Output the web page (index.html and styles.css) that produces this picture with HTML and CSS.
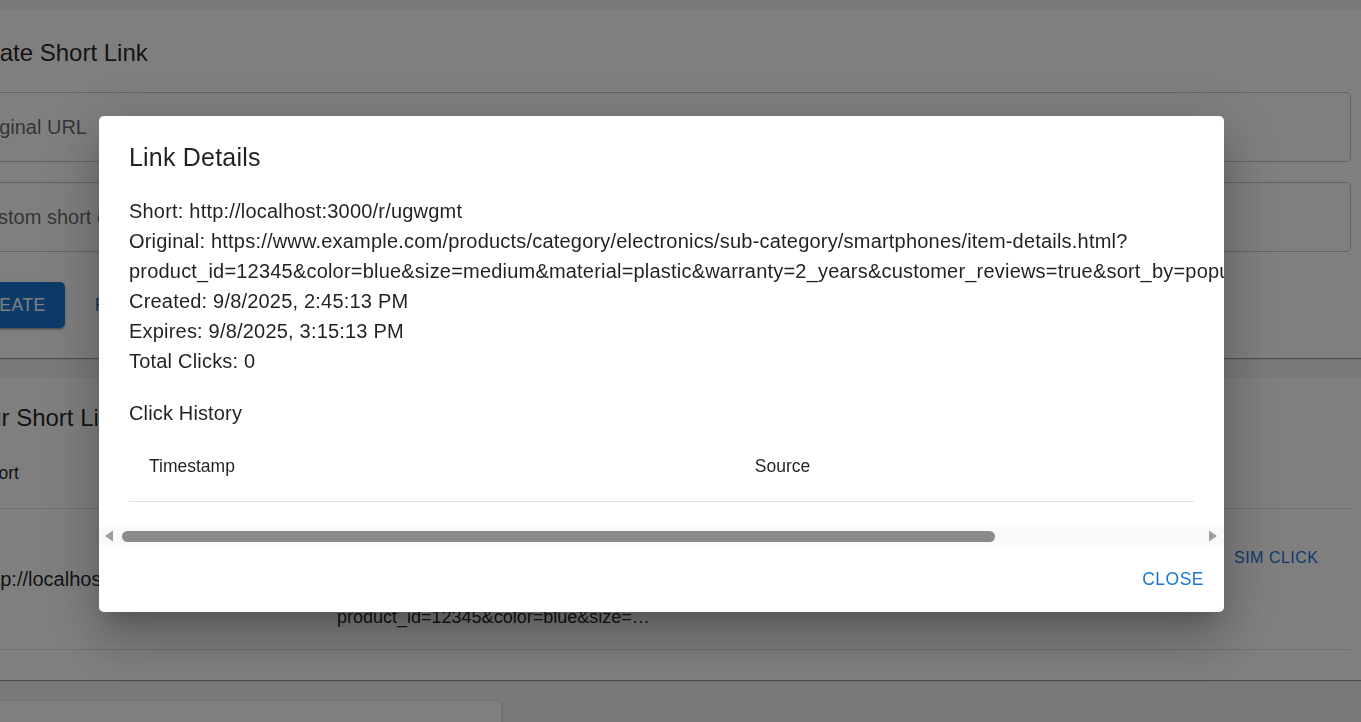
FILE: index.html
```html
<!DOCTYPE html>
<html lang="en">
<head>
<meta charset="utf-8">
<title>Link Details</title>
<link rel="stylesheet" href="styles.css">
</head>
<body>
<div class="page">
  <section class="paper create">
    <h2 class="h5 create-title">Create Short Link</h2>
    <div class="field"><span class="field-label">Original URL</span></div>
    <div class="field"><span class="field-label">Custom short code (optional)</span></div>
    <div class="btn-row">
      <button class="btn btn-contained">Create</button>
      <button class="btn btn-text">Reset</button>
    </div>
  </section>

  <section class="paper list">
    <h2 class="h5 list-title">Your Short Links</h2>
    <table class="links">
      <thead>
        <tr>
          <th class="col-short">Short</th>
          <th class="col-orig">Original</th>
          <th class="col-actions">Actions</th>
        </tr>
      </thead>
      <tbody>
        <tr>
          <td class="col-short cell-short">http://localhost:3000/r/ugwgmt</td>
          <td class="col-orig cell-orig">
            <span class="clamp-line">https://www.example.com/products/category/electronics/</span>
            <span class="clamp-line">sub-category/smartphones/item-details.html?</span>
            <span class="clamp-line">product_id=12345&amp;color=blue&amp;size=…</span>
          </td>
          <td class="col-actions cell-actions">
            <div class="action-btns">
              <button class="btn btn-text btn-small">Details</button>
              <button class="btn btn-text btn-small">Sim Click</button>
            </div>
          </td>
        </tr>
      </tbody>
    </table>
  </section>

  <section class="bottom-row">
    <div class="paper stat-card"></div>
  </section>
</div>

<div class="backdrop"></div>

<div class="dialog" role="dialog" aria-labelledby="dlg-title">
  <h2 class="dialog-title" id="dlg-title">Link Details</h2>
  <div class="dialog-content">
    <p class="line">Short: http://localhost:3000/r/ugwgmt</p>
    <p class="line">Original: https://www.example.com/products/category/electronics/sub-category/smartphones/item-details.html?</p>
    <p class="line">product_id=12345&amp;color=blue&amp;size=medium&amp;material=plastic&amp;warranty=2_years&amp;customer_reviews=true&amp;sort_by=popularity&amp;page=1</p>
    <p class="line">Created: 9/8/2025, 2:45:13 PM</p>
    <p class="line">Expires: 9/8/2025, 3:15:13 PM</p>
    <p class="line">Total Clicks: 0</p>
    <h3 class="subtitle">Click History</h3>
    <table class="history">
      <thead>
        <tr><th>Timestamp</th><th>Source</th></tr>
      </thead>
      <tbody></tbody>
    </table>
  </div>
  <div class="hscroll" aria-hidden="true">
    <svg class="arrow" width="9" height="12" viewBox="0 0 9 12"><path d="M9 0.5 L9 11.5 L1 6 Z" fill="#9d9d9d"/></svg>
    <div class="thumb"></div>
    <div class="spacer"></div>
    <svg class="arrow" width="9" height="12" viewBox="0 0 9 12"><path d="M0 0.5 L0 11.5 L8 6 Z" fill="#9d9d9d"/></svg>
  </div>
  <div class="dialog-actions">
    <button class="btn btn-text btn-close">Close</button>
  </div>
</div>
</body>
</html>
```

FILE: styles.css
```css
* { box-sizing: border-box; }

html, body {
  margin: 0;
  padding: 0;
  height: 100%;
  overflow: hidden;
}

body {
  background: #f5f5f5;
  font-family: "Liberation Sans", Arial, Helvetica, sans-serif;
  color: rgba(0, 0, 0, 0.87);
  font-size: 20px;
  line-height: 1.5;
}

.page {
  width: 1457px;
  margin-left: -76px;
  padding-top: 10px;
}

.paper {
  background: #fff;
  border-radius: 5px;
  box-shadow: 0 2px 1px -1px rgba(0,0,0,0.2), 0 1px 1px 0 rgba(0,0,0,0.14), 0 1px 3px 0 rgba(0,0,0,0.12);
}

.h5 {
  margin: 0;
  font-size: 24px;
  font-weight: 400;
  line-height: 40px;
}

.create {
  padding: 23px 30px 30px;
  display: flex;
  flex-direction: column;
}

.create-title {
  margin: 0 0 19px 7px;
}

.field {
  height: 70px;
  border: 1px solid rgba(0, 0, 0, 0.23);
  border-radius: 5px;
  display: flex;
  align-items: center;
  padding-left: 17.5px;
  margin-bottom: 20px;
}

.field-label {
  color: rgba(0, 0, 0, 0.6);
  font-size: 20px;
  line-height: 1;
  white-space: nowrap;
}

.btn-row {
  display: flex;
  gap: 20px;
  margin-top: 10px;
}

.btn {
  font-family: inherit;
  font-size: 17.5px;
  line-height: 1.75;
  letter-spacing: 0.5px;
  text-transform: uppercase;
  border: 0;
  border-radius: 5px;
  padding: 7.5px 10px;
  background: transparent;
  color: #1976d2;
  cursor: pointer;
}

.btn-contained {
  background: #1976d2;
  color: #fff;
  padding: 7.5px 19px;
  box-shadow: 0 3px 1px -2px rgba(0,0,0,0.2), 0 2px 2px 0 rgba(0,0,0,0.14), 0 1px 5px 0 rgba(0,0,0,0.12);
}

.list {
  margin-top: 20px;
  padding: 20px 30px 30px;
}

.list-title {
  margin-left: 7px;
  line-height: 40px;
}

.links {
  width: 100%;
  border-collapse: collapse;
  table-layout: fixed;
}

.links th,
.links td {
  text-align: left;
  border-bottom: 1px solid #e0e0e0;
  padding: 20px;
  font-size: 17.5px;
  line-height: 30px;
  font-weight: 400;
}

.links th.col-short { padding-left: 23px; }

.links td {
  font-size: 20px;
  vertical-align: top;
  height: 141px;
}

.col-short { width: 363px; }
.col-actions { width: 246px; }

.cell-short { padding: 55px 20px 0 24px !important; white-space: nowrap; overflow: hidden; }
.cell-orig { padding: 33px 20px 0 !important; font-size: 18px !important; }
.clamp-line { display: block; white-space: nowrap; overflow: hidden; }
.cell-actions { padding: 28px 20px 0 !important; }

.action-btns {
  display: flex;
  gap: 10px;
  white-space: nowrap;
}

.btn-small {
  font-size: 16px;
}

.bottom-row {
  margin-top: 20px;
  display: flex;
}

.stat-card {
  width: 578px;
  height: 120px;
  border: 1px solid rgba(0,0,0,0.08);
}

.backdrop {
  position: fixed;
  inset: 0;
  background: rgba(0, 0, 0, 0.5);
}

.dialog {
  position: fixed;
  left: 99px;
  top: 116px;
  width: 1125px;
  background: #fff;
  border-radius: 5px;
  overflow: hidden;
  box-shadow: 0 14px 19px -9px rgba(0,0,0,0.2), 0 30px 48px 4px rgba(0,0,0,0.14), 0 11px 58px 10px rgba(0,0,0,0.12);
  color: rgba(0, 0, 0, 0.87);
}

.dialog-title {
  margin: 0;
  padding: 21px 30px 19px;
  font-size: 25px;
  line-height: 40px;
  font-weight: 400;
  letter-spacing: 0.2px;
}

.dialog-content {
  padding: 0 30px 25px;
  overflow: hidden;
}

.line {
  margin: 0;
  font-size: 20px;
  line-height: 30px;
  letter-spacing: 0.2px;
  white-space: nowrap;
}

.subtitle {
  margin: 20px 0 0;
  font-size: 20px;
  line-height: 35px;
  font-weight: 400;
  letter-spacing: 0.15px;
}

.history {
  width: 100%;
  border-collapse: collapse;
}

.history th {
  text-align: left;
  font-weight: 400;
  font-size: 17.5px;
  line-height: 30px;
  padding: 20px;
  border-bottom: 1px solid #e0e0e0;
}

.hscroll {
  height: 18px;
  background: #f9f9f9;
  display: flex;
  align-items: center;
  padding: 0 6px 0 5px;
}

.hscroll .arrow { flex: none; display: block; }

.thumb {
  margin-left: 9px;
  width: 873px;
  height: 11px;
  border-radius: 6px;
  background: #8b8b8b;
}

.spacer { flex: 1; }

.dialog-actions {
  display: flex;
  justify-content: flex-end;
  padding: 11px 10px 10px;
}

.btn-close {
  padding: 7.5px 10px;
}
```
